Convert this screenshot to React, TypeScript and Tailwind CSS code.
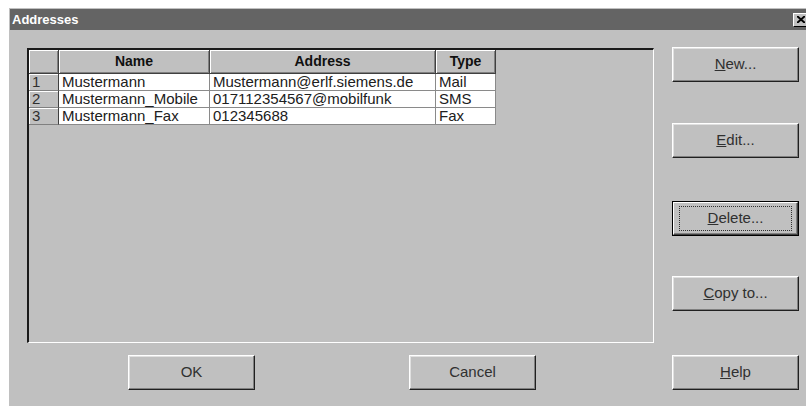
import type { ReactNode } from "react";

type Entry = { name: string; address: string; type: string };

const entries: Entry[] = [
  { name: "Mustermann", address: "Mustermann@erlf.siemens.de", type: "Mail" },
  { name: "Mustermann_Mobile", address: "017112354567@mobilfunk", type: "SMS" },
  { name: "Mustermann_Fax", address: "012345688", type: "Fax" },
];

const cols = "grid grid-cols-[30px_151px_226px_60px]";

// classic raised 3D push button
function Button({ children, focused = false, className = "" }: { children: ReactNode; focused?: boolean; className?: string }) {
  if (focused) {
    return (
      <button className={`h-[35px] w-[127px] border border-black bg-[#c0c0c0] p-0 ${className}`}>
        <div className="flex h-full w-full items-center justify-center border border-t-white border-l-white border-r-[#404040] border-b-[#404040] shadow-[inset_-1px_-1px_0_#808080]">
          <div className="flex h-[25px] w-[113px] items-center justify-center border border-dotted border-[#303030] text-[15px] text-[#303030]">
            {children}
          </div>
        </div>
      </button>
    );
  }
  return (
    <button
      className={`flex h-[35px] w-[127px] items-center justify-center border border-t-white border-l-white border-r-[#202020] border-b-[#202020] bg-[#c0c0c0] text-[15px] text-[#303030] shadow-[inset_-1px_-1px_0_#808080,inset_1px_1px_0_#e0e0e0] ${className}`}
    >
      {children}
    </button>
  );
}

function HeaderCell({ children }: { children?: ReactNode }) {
  return (
    <div className="flex h-[24px] items-center justify-center border-r border-b border-r-[#404040] border-b-[#404040] bg-[#c0c0c0] text-[14px] font-bold text-[#101010] shadow-[inset_1px_1px_0_#ffffff,inset_-1px_-1px_0_#808080]">
      {children}
    </div>
  );
}

function RowHeader({ children }: { children: ReactNode }) {
  return (
    <div className="h-[17px] border-r border-b border-r-[#404040] border-b-[#808080] bg-[#c0c0c0] pl-[3px] text-[15px] leading-[16px] text-[#303030] shadow-[inset_1px_1px_0_#ffffff]">
      {children}
    </div>
  );
}

function Cell({ children }: { children: ReactNode }) {
  return (
    <div className="h-[17px] whitespace-nowrap border-r border-b border-[#8a8a8a] bg-white pl-[3px] text-[15px] leading-[16px] text-[#202020]">
      {children}
    </div>
  );
}

export default function App() {
  return (
    <div className="h-[406px] w-[806px] overflow-hidden bg-white font-['Liberation_Sans',Arial,sans-serif]">
      <div className="ml-[8px] mt-[7px] h-[399px] w-[803px] border-l border-t border-white bg-[#c0c0c0] pt-[1px]">
        {/* title bar */}
        <div className="ml-[1px] flex h-[21px] items-center justify-between bg-[#646464] pl-[2px] pr-[2px]">
          <span className="text-[13px] font-bold text-white">Addresses</span>
          <div className="flex h-[14px] w-[16px] items-center justify-center border border-t-white border-l-white border-r-black border-b-black bg-[#c0c0c0]">
            <svg width="8" height="7" viewBox="0 0 8 7">
              <path d="M0 0 L8 7 M8 0 L0 7" stroke="#000" strokeWidth="2" />
            </svg>
          </div>
        </div>

        <div className="flex pl-[18px] pt-[18px]">
          {/* left: grid + OK/Cancel */}
          <div className="flex w-[627px] flex-col">
            <div className="h-[295px] w-[627px] border-l-2 border-t-2 border-r border-b border-l-[#1a1a1a] border-t-[#1a1a1a] border-r-white border-b-white bg-[#c0c0c0]">
              <div className={cols + " w-[467px]"}>
                <HeaderCell />
                <HeaderCell>Name</HeaderCell>
                <HeaderCell>Address</HeaderCell>
                <HeaderCell>Type</HeaderCell>
              </div>
              {entries.map((e, i) => (
                <div key={e.name} className={cols + " w-[467px]"}>
                  <RowHeader>{i + 1}</RowHeader>
                  <Cell>{e.name}</Cell>
                  <Cell>{e.address}</Cell>
                  <Cell>{e.type}</Cell>
                </div>
              ))}
            </div>
            <div className="mt-[12px] flex">
              <Button className="ml-[101px]">OK</Button>
              <Button className="ml-[154px]">Cancel</Button>
            </div>
          </div>

          {/* right: action buttons */}
          <div className="ml-[18px] -mt-[1px] flex flex-col">
            <Button>
              <span><span className="underline">N</span>ew...</span>
            </Button>
            <Button className="mt-[41px]">
              <span><span className="underline">E</span>dit...</span>
            </Button>
            <Button focused className="mt-[43px]">
              <span><span className="underline">D</span>elete...</span>
            </Button>
            <Button className="mt-[40px]">
              <span><span className="underline">C</span>opy to...</span>
            </Button>
            <Button className="mt-[44px]">
              <span><span className="underline">H</span>elp</span>
            </Button>
          </div>
        </div>
      </div>
    </div>
  );
}
